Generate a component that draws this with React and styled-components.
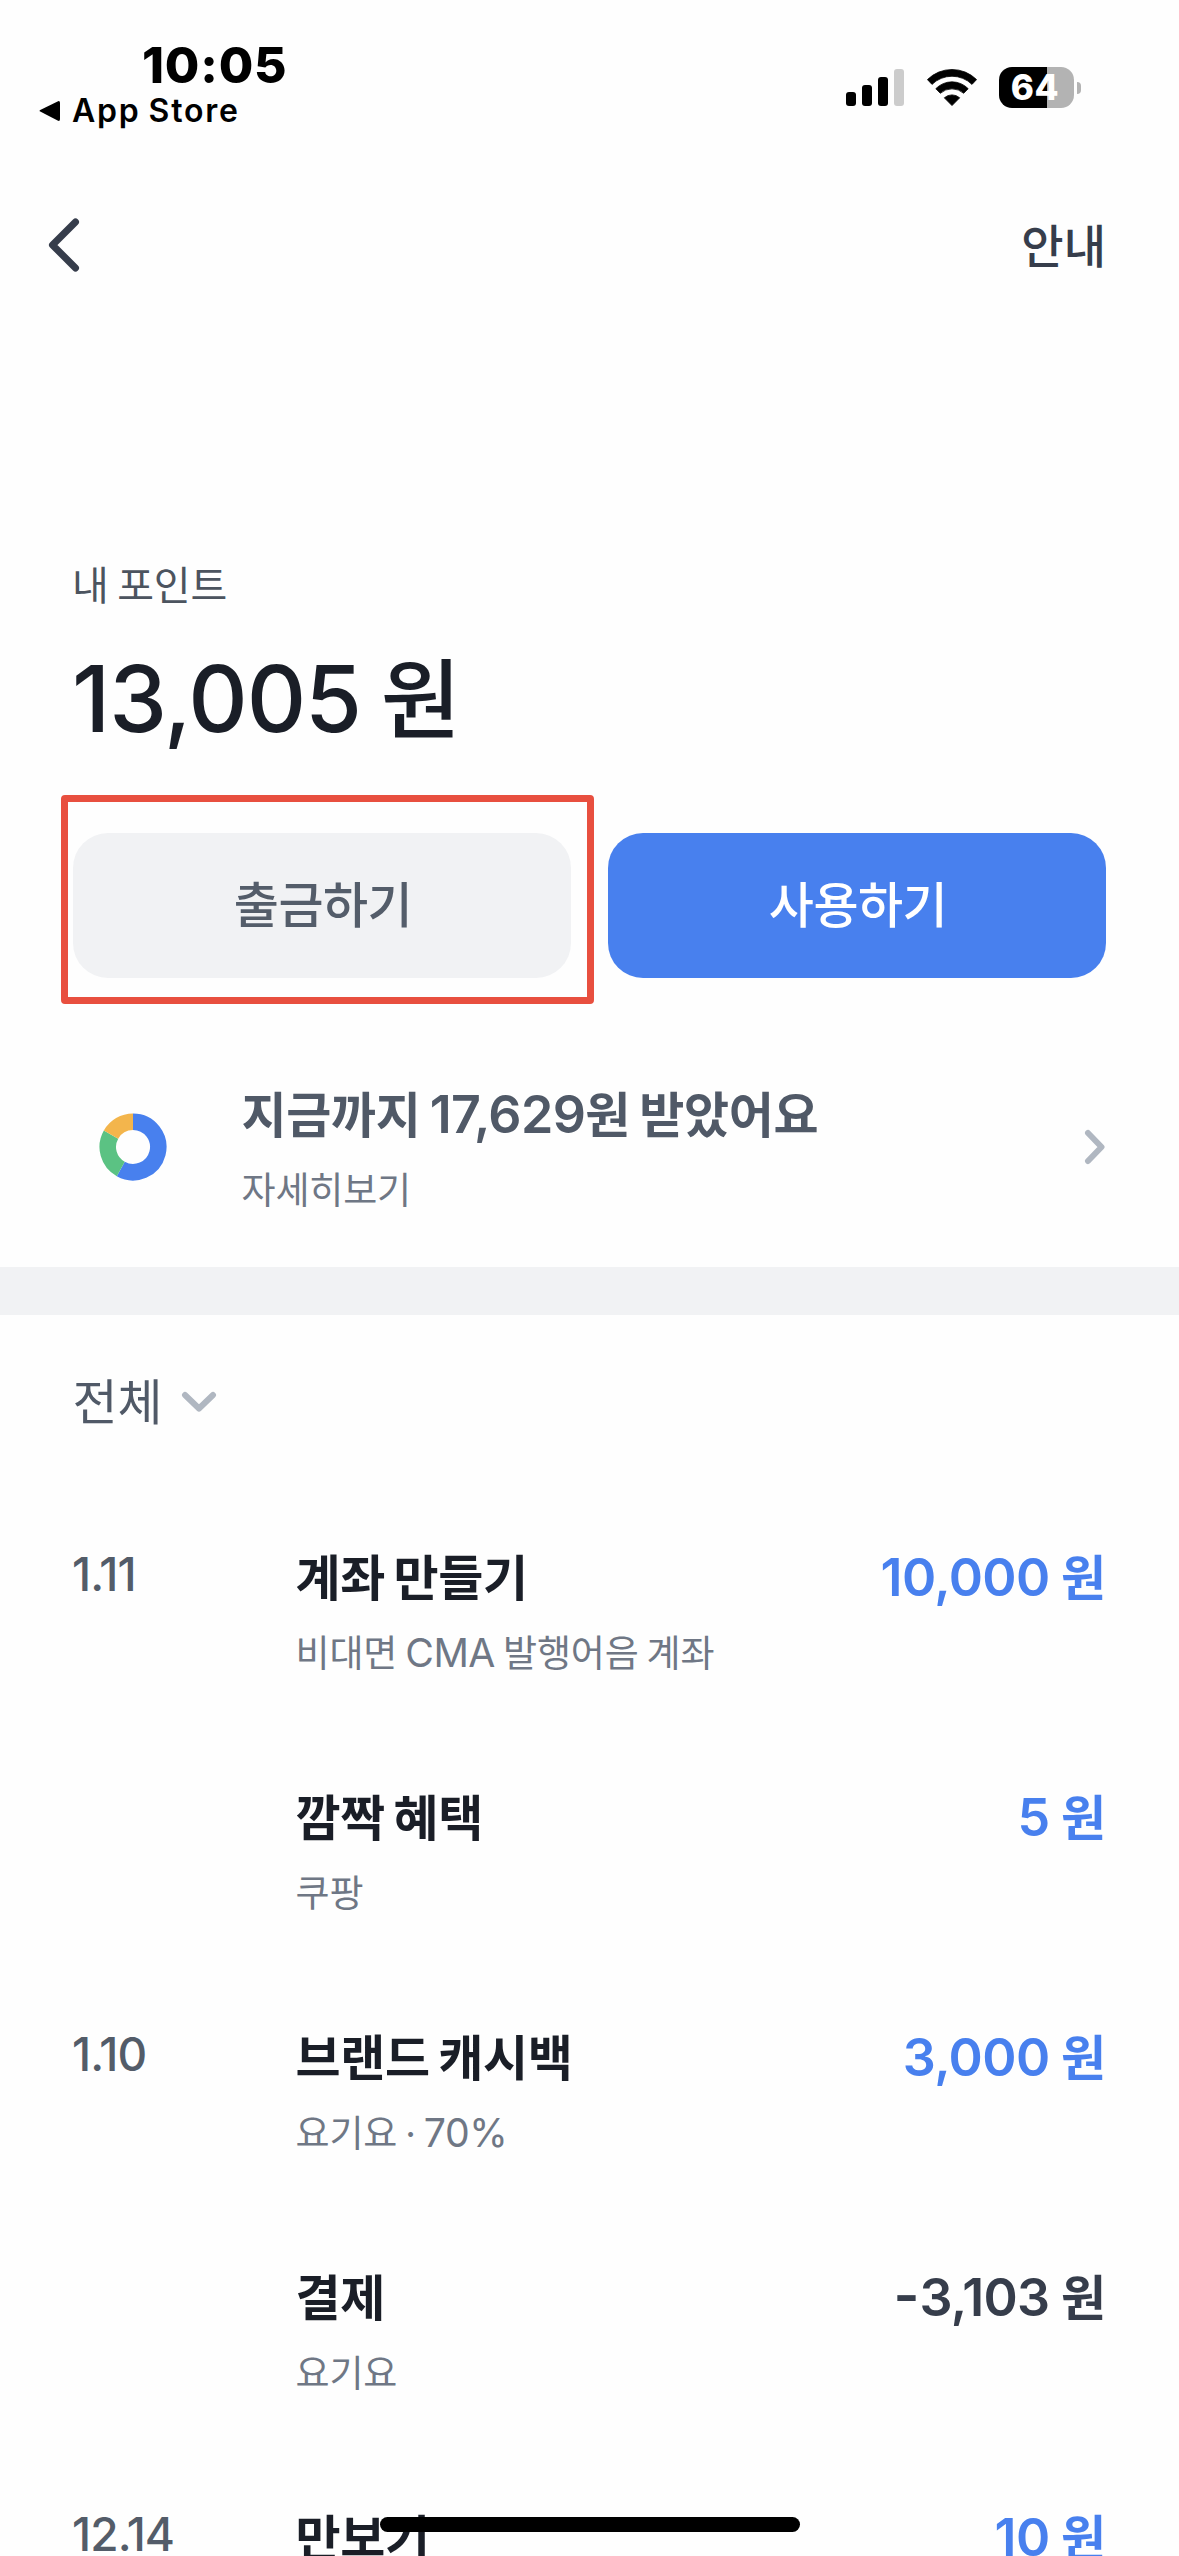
import React from "react";
import styled, { createGlobalStyle, css } from "styled-components";

const GlobalStyle = createGlobalStyle`
  * {
    box-sizing: border-box;
    word-spacing: -0.06em;
  }
  body {
    margin: 0;
    background: #fefefe;
    font-family: Inter, "Noto Sans CJK KR", sans-serif;
    color: #1a1e27;
  }
  button {
    font: inherit;
    border: 0;
    padding: 0;
    background: none;
    color: inherit;
  }
`;

const Screen = styled.main`
  position: relative;
  width: 1179px;
  height: 2556px;
  overflow: hidden;
`;

/* Latin letters and digits run slightly larger than Hangul */
const Num = styled.span`
  font-size: 1.06em;
  letter-spacing: -0.012em;
  line-height: 0;
`;

const Sign = styled.span`
  font-size: 1.14em;
  line-height: 0;
  vertical-align: 1px;
`;

const StatusBar = styled.header`
  display: flex;
  justify-content: space-between;
  height: 175px;
  padding: 40px 98px 0 39px;
  color: #000;
`;

const Clock = styled.div`
  margin-left: 103px;
  font-size: 50px;
  font-weight: 800;
  line-height: 50px;
  letter-spacing: 0.8px;
`;

const ReturnLink = styled.div`
  display: flex;
  align-items: center;
  gap: 11px;
  margin-top: 5px;
  font-size: 32px;
  font-weight: 600;
  line-height: 32px;
  letter-spacing: 1.8px;
`;

const StatusIcons = styled.div`
  display: flex;
  align-items: center;
  gap: 22.5px;
  height: 41px;
  margin-top: 27px;
`;

const Bars = styled.div`
  display: flex;
  align-items: flex-end;
  gap: 6px;
`;

const Bar = styled.i`
  width: 10px;
  height: ${(p) => p.$height}px;
  border-radius: 3px;
  background: ${(p) => (p.$dim ? "#ccc" : "#000")};
`;

const Battery = styled.div`
  display: flex;
  align-items: center;
  gap: 3px;
`;

const BatteryBody = styled.div`
  width: 75px;
  height: 41px;
  padding-right: 3px;
  border-radius: 13px;
  background: linear-gradient(90deg, #000 64%, #b3b3b3 64%);
  color: #fff;
  font-size: 35px;
  font-weight: 800;
  line-height: 41px;
  letter-spacing: 0.5px;
  text-align: center;
`;

const BatteryCap = styled.div`
  width: 4px;
  height: 12px;
  border-radius: 0 6px 6px 0;
  background: #b3b3b3;
`;

const NavBar = styled.nav`
  display: flex;
  align-items: center;
  justify-content: space-between;
  height: 140px;
  padding: 0 73px 0 48px;
  color: #363d4b;
`;

const NavAction = styled.button`
  margin-top: 1px;
  font-size: 46px;
  font-weight: 500;
  line-height: 60px;
`;

const Balance = styled.section`
  padding: 241px 71px 0 72px;
`;

const BalanceLabel = styled.div`
  color: #4c545f;
  font-size: 40px;
  line-height: 60px;
  letter-spacing: -0.2px;
`;

const BalanceAmount = styled.div`
  margin-top: 30px;
  font-size: 87px;
  font-weight: 500;
  line-height: 110px;
  word-spacing: -0.04em;
`;

const Actions = styled.div`
  display: flex;
  gap: 37px;
  padding: 77px 73px 0;
`;

const ActionSlot = styled.div`
  position: relative;
  display: flex;
  flex: 1;
`;

const tones = {
  muted: css`
    background: #f1f2f4;
    color: #545d6a;
  `,
  primary: css`
    background: #4880ee;
    color: #fff;
  `,
};

const ActionButton = styled.button`
  flex: 1;
  height: 145px;
  padding-left: 2px;
  border-radius: 35px;
  font-size: 49px;
  font-weight: 500;
  line-height: 60px;
  letter-spacing: -0.5px;
  ${(p) => tones[p.$tone]}
`;

const Highlight = styled.span`
  position: absolute;
  inset: -38px -22.5px -26px -12px;
  border: 7px solid #e84f3f;
  border-radius: 4px;
`;

const Summary = styled.section`
  display: flex;
  align-items: center;
  height: 289px;
  padding: 49px 73px 0 99px;
`;

const SummaryText = styled.div`
  flex: 1;
  margin: 7px 0 0 74.5px;
`;

const SummaryTitle = styled.div`
  color: #505967;
  font-size: 49px;
  font-weight: 600;
  line-height: 60px;
  letter-spacing: -0.3px;
`;

const Caption = styled.div`
  margin-top: 20px;
  color: #6f7785;
  font-size: 37px;
  font-weight: 400;
  line-height: 50px;
  letter-spacing: -0.15px;
`;

const Divider = styled.div`
  height: 48px;
  background: #f1f2f4;
`;

const Filter = styled.div`
  display: flex;
  align-items: center;
  gap: 18px;
  padding: 58px 72.5px 0;
  color: #505967;
  font-size: 49px;
  line-height: 60px;
`;

const List = styled.ul`
  display: flex;
  flex-direction: column;
  gap: 110px;
  margin: 0;
  padding: 116px 73px 0 72px;
  list-style: none;
`;

const Entry = styled.li`
  display: grid;
  grid-template-columns: 223.5px 1fr auto;
  align-items: start;
`;

const EntryDate = styled.time`
  margin-top: -5px;
  color: #535c69;
  font-size: 46px;
  font-weight: 500;
  line-height: 60px;
  letter-spacing: -0.9px;
`;

const EntryTitle = styled.div`
  font-size: 49px;
  font-weight: 700;
  line-height: 60px;
  letter-spacing: -0.3px;
`;

const EntryAmount = styled.div`
  color: ${(p) => (p.$spent ? "#363d4b" : "#4880ee")};
  font-size: 49px;
  font-weight: 600;
  line-height: 60px;
  word-spacing: -0.02em;
`;

const HomeIndicator = styled.div`
  position: absolute;
  left: 380px;
  bottom: 24px;
  width: 420px;
  height: 15px;
  border-radius: 8px;
  background: #000;
`;

const ENTRIES = [
  { date: "1.11", title: "계좌 만들기", note: <>비대면 <Num>CMA</Num> 발행어음 계좌</>, amount: "10,000" },
  { date: "", title: "깜짝 혜택", note: "쿠팡", amount: "5" },
  { date: "1.10", title: "브랜드 캐시백", note: <>요기요 · <Num>70%</Num></>, amount: "3,000" },
  { date: "", title: "결제", note: "요기요", amount: "3,103", spent: true },
  { date: "12.14", title: "만보기", note: "", amount: "10" },
];

const BackTriangle = () => (
  <svg width="22" height="24" viewBox="0 0 22 24" aria-hidden="true">
    <path d="M1.2 12.6 18.6 21.6Q21 22.6 21 20V4Q21 1.4 18.6 2.4L1.2 11Q-.2 11.8 1.2 12.6Z" fill="#000" />
  </svg>
);

const Wifi = () => (
  <svg width="50" height="37" viewBox="0 0 50 37" aria-hidden="true">
    <path
      d="M.4 10.6A35 35 0 0 1 49.6 10.6L45 15.4A28.6 28.6 0 0 0 5 15.4ZM8.8 19.7A22.6 22.6 0 0 1 41.2 19.7L36.7 24.3A17.6 17.6 0 0 0 13.3 24.3ZM17.3 28.8A11.6 11.6 0 0 1 32.7 28.8L25 36.6Z"
      stroke="#000"
      strokeWidth=".8"
      strokeLinejoin="round"
    />
  </svg>
);

const Chevron = ({ width, height, points, color, weight }) => (
  <svg width={width} height={height} viewBox={`0 0 ${width} ${height}`} aria-hidden="true">
    <polyline points={points} fill="none" stroke={color} strokeWidth={weight} strokeLinecap="round" strokeLinejoin="round" />
  </svg>
);

const Donut = () => (
  <svg width="68" height="68" viewBox="-34 -34 68 68" aria-hidden="true">
    <g fill="none" strokeWidth="16.5">
      <path d="M0 -25.25A25.25 25.25 0 1 1 -12.24 22.08" stroke="#4880ee" />
      <path d="M-12.24 22.08A25.25 25.25 0 0 1 -21.98 -12.43" stroke="#5bc283" />
      <path d="M-21.98 -12.43A25.25 25.25 0 0 1 0 -25.25" stroke="#f3b54c" />
    </g>
  </svg>
);

export default function App() {
  return (
    <Screen>
      <GlobalStyle />
      <StatusBar>
        <div>
          <Clock>10:05</Clock>
          <ReturnLink><BackTriangle />App Store</ReturnLink>
        </div>
        <StatusIcons>
          <Bars>
            <Bar $height={14} />
            <Bar $height={21} />
            <Bar $height={29} />
            <Bar $height={37} $dim />
          </Bars>
          <Wifi />
          <Battery>
            <BatteryBody>64</BatteryBody>
            <BatteryCap />
          </Battery>
        </StatusIcons>
      </StatusBar>

      <NavBar>
        <Chevron width={32} height={56} points="27.5,5 4.5,28 27.5,51" color="#363d4b" weight={7} />
        <NavAction>안내</NavAction>
      </NavBar>

      <Balance>
        <BalanceLabel>내 포인트</BalanceLabel>
        <BalanceAmount><Num>13,005</Num> 원</BalanceAmount>
      </Balance>

      <Actions>
        <ActionSlot>
          <ActionButton $tone="muted">출금하기</ActionButton>
          <Highlight />
        </ActionSlot>
        <ActionSlot>
          <ActionButton $tone="primary">사용하기</ActionButton>
        </ActionSlot>
      </Actions>

      <Summary>
        <Donut />
        <SummaryText>
          <SummaryTitle>지금까지 <Num>17,629</Num>원 받았어요</SummaryTitle>
          <Caption>자세히보기</Caption>
        </SummaryText>
        <Chevron width={22} height={36} points="4,4 17.5,18 4,32" color="#b0b7c1" weight={6} />
      </Summary>

      <Divider />

      <Filter>
        전체
        <Chevron width={36} height={24} points="4,4 18,17.5 32,4" color="#b0b7c1" weight={6} />
      </Filter>

      <List>
        {ENTRIES.map((entry) => (
          <Entry key={entry.title}>
            <EntryDate>{entry.date}</EntryDate>
            <div>
              <EntryTitle>{entry.title}</EntryTitle>
              <Caption>{entry.note}</Caption>
            </div>
            <EntryAmount $spent={entry.spent}>
              {entry.spent && <Sign>-</Sign>}
              <Num>{entry.amount}</Num> 원
            </EntryAmount>
          </Entry>
        ))}
      </List>

      <HomeIndicator />
    </Screen>
  );
}
